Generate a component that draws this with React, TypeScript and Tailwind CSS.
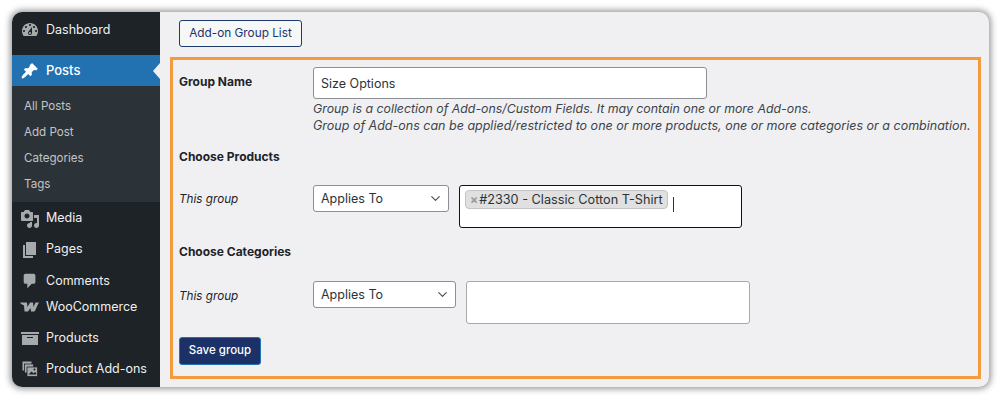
import React from "react";
import { ChevronDown } from "lucide-react";

const font = "font-['Inter','Liberation_Sans',sans-serif]";

const DashIcon = ({ d, size = 20, color = "#a7aaad" }: { d: string; size?: number; color?: string }) => (
  <svg width={size} height={size} viewBox="0 0 20 20" fill={color}>
    <path fillRule="evenodd" d={d} />
  </svg>
);

const dashboardPath = "M3.76 16h12.48c1.1-1.37 1.76-3.11 1.76-5 0-4.42-3.58-8-8-8s-8 3.58-8 8c0 1.89.66 3.63 1.76 5zM10 4c.55 0 1 .45 1 1s-.45 1-1 1-1-.45-1-1 .45-1 1-1zM6 6c.55 0 1 .45 1 1s-.45 1-1 1-1-.45-1-1 .45-1 1-1zm8 0c.55 0 1 .45 1 1s-.45 1-1 1-1-.45-1-1 .45-1 1-1zm-5.370 5.550L12 7v6c0 1.100-.9 2-2 2s-2-.9-2-2c0-.57.24-1.080.63-1.450zM4 10c.55 0 1 .45 1 1s-.45 1-1 1-1-.45-1-1 .45-1 1-1zm12 0c.55 0 1 .45 1 1s-.45 1-1 1-1-.45-1-1 .45-1 1-1zm-5 3c0-.55-.45-1-1-1s-1 .45-1 1 .45 1 1 1 1-.45 1-1z";
const pinPath = "M10.440 3.020l1.820-1.820 6.360 6.350-1.830 1.820c-1.050-.68-2.480-.57-3.410.36l-.75.75c-.92.93-1.040 2.350-.35 3.410l-1.830 1.820-2.410-2.410-2.830 2.840c-.78.78-3.540 2.650-4.320 1.870s1.090-3.540 1.870-4.320l2.840-2.830-2.410-2.410 1.820-1.830c1.060.69 2.480.57 3.410-.35l.75-.75c.93-.93 1.040-2.360.36-3.410z";
const mediaPath = "M13 11V4c0-.55-.45-1-1-1h-1.670L9 1H5L3.670 3H2c-.55 0-1 .45-1 1v7c0 .55.45 1 1 1h10c.55 0 1-.45 1-1zM7 4.500c1.380 0 2.500 1.120 2.500 2.500S8.380 9.500 7 9.500 4.500 8.380 4.500 7 5.620 4.500 7 4.500zM14 6h5v10.500c0 1.380-1.120 2.500-2.500 2.500S14 17.880 14 16.500s1.120-2.500 2.500-2.500c.17 0 .34.020.5.050V9h-3V6zm-4 8.050V13h2v3.500c0 1.380-1.120 2.500-2.500 2.500S7 17.880 7 16.500 8.120 14 9.500 14c.17 0 .34.020.5.050z";
const pagesPath = "M6 15V2h10v13H6zm-1 1h8v2H3V5h2v11z";
const commentPath = "M5 2h9c1.100 0 2 .9 2 2v7c0 1.100-.9 2-2 2h-2l-5 5v-5H5c-1.100 0-2-.9-2-2V4c0-1.100.9-2 2-2z";
const archivePath = "M19 4v2H1V4h18zM2 7h16v10H2V7zm11 3V9H7v1h6z";

const WooIcon = () => (
  <svg width="19" height="10" viewBox="0 0 19 10" fill="#a7aaad">
    <path d="M0 .5H7L7.500 5 10 .5h3L13.500 5l2-4.500H19C17.500 3 16 7 14.500 9.500H11L10.500 6 8 9.500H4.500L4 3.500C3 3 1 2.500 0 .5z" />
  </svg>
);

const AddOnsIcon = () => (
  <svg width="16" height="16" viewBox="0 0 16 16" fill="#a7aaad" stroke="#1d2327" strokeWidth="0.8">
    <rect x="0.5" y="0.5" width="9" height="9" stroke="none" />
    <rect x="2.500" y="3" width="9" height="9" />
    <rect x="5" y="6" width="10.500" height="9.500" />
    <path d="M6.500 13.500l3-3 2 1.700 1.500-1.200 1.200 1v1.500z" fill="#1d2327" stroke="none" />
    <circle cx="12.500" cy="8.500" r="1" fill="#1d2327" stroke="none" />
  </svg>
);

const NavItem = ({ icon, label, className }: { icon: React.ReactNode; label: string; className: string }) => (
  <div className={`flex items-center text-[12.5px] text-[#f0f0f1] ${className}`}>
    <span className="flex w-[34px] shrink-0 justify-center pl-[1px]">{icon}</span>
    <span>{label}</span>
  </div>
);

const SubItem = ({ label }: { label: string }) => (
  <div className="flex h-[26px] items-center pl-[12px] text-[11.6px] text-[#c3c4c7]">{label}</div>
);

const Sidebar = () => (
  <div className="flex w-[148px] shrink-0 flex-col bg-[#1d2327]">
    <NavItem icon={<DashIcon d={dashboardPath} />} label="Dashboard" className="h-[34px] pt-[2px] mb-[9px]" />
    <div className="relative flex h-[31px] items-center bg-[#2271b1] text-[13px] font-medium text-white">
      <span className="flex w-[34px] shrink-0 justify-center pl-[1px]"><DashIcon d={pinPath} size={18} color="#fff" /></span>
      <span>Posts</span>
      <div className="absolute right-0 top-[8px] h-0 w-0 border-y-[8px] border-r-[7px] border-y-transparent border-r-[#f0f0f1]" />
    </div>
    <div className="flex h-[116px] flex-col justify-center bg-[#2c3338] pt-[4px]">
      <SubItem label="All Posts" />
      <SubItem label="Add Post" />
      <SubItem label="Categories" />
      <SubItem label="Tags" />
    </div>
    <NavItem icon={<DashIcon d={mediaPath} />} label="Media" className="h-[31px] pt-[2px]" />
    <NavItem icon={<DashIcon d={pagesPath} />} label="Pages" className="h-[31px] pt-[2px]" />
    <NavItem icon={<DashIcon d={commentPath} size={18} />} label="Comments" className="h-[33px] pt-[1px]" />
    <NavItem icon={<WooIcon />} label="WooCommerce" className="h-[20px]" />
    <NavItem icon={<DashIcon d={archivePath} />} label="Products" className="h-[42px]" />
    <NavItem icon={<AddOnsIcon />} label="Product Add-ons" className="h-[20px]" />
  </div>
);

const AppliesTo = ({ className }: { className: string }) => (
  <div className={`flex h-[27px] shrink-0 items-center justify-between rounded-[3px] border border-[#8c8f94] bg-white pl-[7px] pr-[5px] text-[12.5px] text-[#2c3338] ${className}`}>
    <span className="pt-[2px]">Applies To</span>
    <ChevronDown size={15} strokeWidth={2} className="text-[#50575e]" />
  </div>
);

const App = () => (
  <div className={`h-[400px] w-[1000px] overflow-hidden bg-white pl-[12px] pt-[12px] ${font}`}>
    <div className="flex h-[375px] w-[977px] overflow-hidden rounded-[10px] bg-[#f0f0f2] shadow-[0_0_6px_2px_rgba(0,0,0,0.4)]">
      <Sidebar />
      <div className="min-w-0 flex-1 pl-[10px] pr-[8px] pt-[8px]">
        <button className="ml-[9px] flex h-[27px] w-[123px] items-center justify-center rounded-[3px] border border-[#1e3a6e] bg-[#f6f7f7] text-[11.8px] text-[#1e3368]">
          Add-on Group List
        </button>
        <div className="mt-[10px] h-[322px] w-[811px] border-[3px] border-[#f59a3f] pl-[6px] pt-[7px] text-[12px] text-[#1d2327]">
          <div className="flex">
            <div className="w-[134px] shrink-0 pt-[6px] font-bold">Group Name</div>
            <div>
              <div className="flex h-[32px] w-[394px] items-center rounded-[3px] border border-[#8c8f94] bg-white px-[7px] pt-[2px] text-[12.5px] text-[#2c3338]">
                Size Options
              </div>
              <p className="mt-[1px] whitespace-nowrap text-[12.5px] leading-[17px] italic text-[#3c434a]">
                <span className="text-[12.35px]">Group is a collection of Add-ons/Custom Fields. It may contain one or more Add-ons.</span>
                <br />
                Group of Add-ons can be applied/restricted to one or more products, one or more categories or a combination.
              </p>
            </div>
          </div>

          <div className="mt-[14px] font-bold">Choose Products</div>

          <div className="mt-[19px] flex items-start">
            <div className="w-[134px] shrink-0 pt-[6px] text-[11.7px] italic">This group</div>
            <AppliesTo className="w-[136px]" />
            <div className="ml-[10px] flex h-[43px] w-[283px] items-start rounded-[3px] border border-[#111] bg-white pl-[5px] pt-[4px]">
              <span className="flex h-[19px] items-center rounded-[4px] border border-[#c3c4c7] bg-[#e0e0e0] pl-[4px] pr-[4px] pt-[1px] text-[12.7px] leading-none text-[#2c3338]">
                <span className="mr-[1px] text-[12px] font-bold text-[#999]">×</span>#2330 - Classic Cotton T-Shirt
              </span>
              <span className="ml-[5px] mt-[7px] h-[15px] w-[1px] bg-[#2c3338]" />
            </div>
          </div>

          <div className="mt-[15px] font-bold">Choose Categories</div>

          <div className="mt-[20px] flex items-start">
            <div className="w-[134px] shrink-0 pt-[7px] text-[11.7px] italic">This group</div>
            <AppliesTo className="w-[143px]" />
            <div className="ml-[10px] h-[43px] w-[284px] rounded-[3px] border border-[#a7aaad] bg-white" />
          </div>

          <button className="mt-[13px] flex h-[28px] w-[82px] items-center justify-center rounded-[3px] border border-[#2271b1] bg-[#1b3167] text-[11.5px] font-medium text-white">
            Save group
          </button>
        </div>
      </div>
    </div>
  </div>
);

export default App;
